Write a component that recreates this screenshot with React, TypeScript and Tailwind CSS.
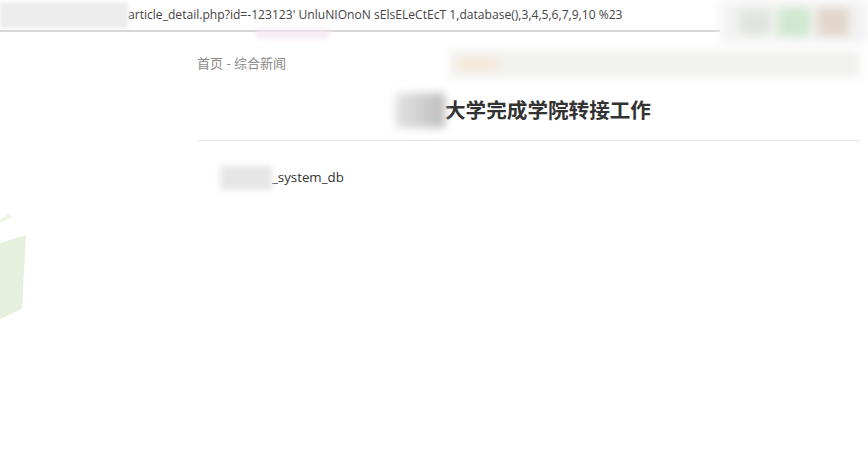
export default function App() {
  return (
    <div className="relative h-[460px] w-[868px] overflow-hidden bg-white font-['Open_Sans','Noto_Sans_CJK_SC',sans-serif]">
      {/* address bar */}
      <div className="flex h-[43px]">
        <div className="flex h-[32px] w-[720px] items-center border-b-2 border-[#d6d6d6]">
          <div className="h-[26px] w-[128px] bg-[#ececec] blur-[2px]" />
          <span className="whitespace-nowrap text-[12.1px] text-[#444]">
            article_detail.php?id=-123123' UnluNIOnoN sElsELeCtEcT 1,database(),3,4,5,6,7,9,10 %23
          </span>
        </div>
        <div className="flex w-[148px] items-center justify-around bg-[#f3f3f3] px-4 blur-[5px]">
          <div className="h-6 w-8 rounded bg-[#dfe5de]" />
          <div className="h-7 w-8 rounded bg-[#cfe8cf]" />
          <div className="h-7 w-8 rounded bg-[#e2d6cb]" />
        </div>
      </div>
      <div className="absolute left-[255px] top-[30px] h-[8px] w-[75px] rounded-full bg-[#f6e6f3] blur-[3px]" />

      {/* decorative shape */}
      <svg className="absolute left-0 top-[205px]" width="30" height="120" viewBox="0 0 30 120">
        <polygon points="0,14 10,8 12,12 0,18" fill="#eef6e8" />
        <polygon points="0,38 26,30 22,104 0,114" fill="#e6f1dd" />
      </svg>

      <main className="ml-[197px] w-[663px]">
        <div className="mt-[7px] flex h-[28px] items-center">
          <span className="text-[13px] text-[#888]">首页 - 综合新闻</span>
          <div className="ml-auto h-[28px] w-[410px] bg-[#f1f1f0] blur-[4px]">
            <div className="ml-[8px] mt-[8px] h-3 w-10 bg-[#f7e9d7]" />
          </div>
        </div>
        <div className="mt-[15px] flex h-[35px] items-center justify-center pr-[11px]">
          <div className="h-[35px] w-[50px] bg-gradient-to-r from-[#e4e4e4] to-[#bdbdbd] blur-[4px]" />
          <h1 className="text-[20.6px] font-bold text-[#333]">大学完成学院转接工作</h1>
        </div>
        <div className="mt-[12px] border-t border-[#e6e6e6]" />
        <div className="mt-[25px] flex h-[24px] items-center pl-[23px]">
          <div className="h-[24px] w-[52px] bg-[#e6e6e6] blur-[3px]" />
          <span className="text-[13.3px] text-[#333]">_system_db</span>
        </div>
      </main>
    </div>
  );
}
